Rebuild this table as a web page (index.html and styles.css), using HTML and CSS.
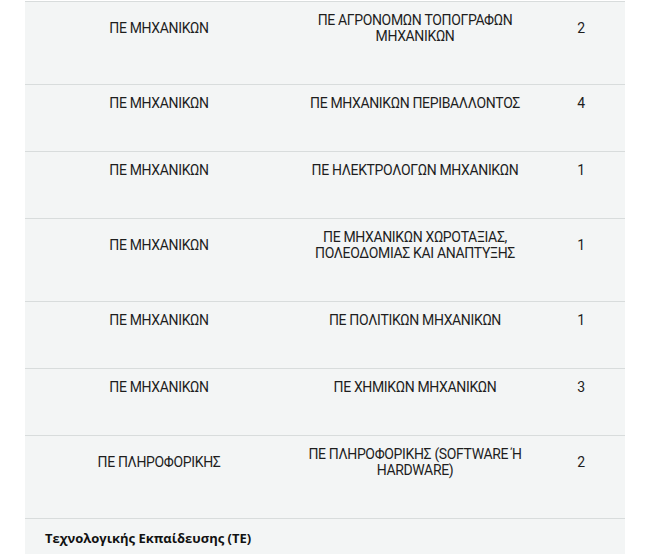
FILE: index.html
```html
<!DOCTYPE html>
<html lang="el">
<head>
<meta charset="utf-8">
<link rel="stylesheet" href="styles.css">
</head>
<body>
<div class="page">
  <table class="posts">
    <colgroup>
      <col class="c-branch">
      <col class="c-spec">
      <col class="c-num">
    </colgroup>
    <tbody>
      <tr><td>ΠΕ ΜΗΧΑΝΙΚΩΝ</td><td>ΠΕ ΑΓΡΟΝΟΜΩΝ ΤΟΠΟΓΡΑΦΩΝ ΜΗΧΑΝΙΚΩΝ</td><td>2</td></tr>
      <tr><td>ΠΕ ΜΗΧΑΝΙΚΩΝ</td><td>ΠΕ ΜΗΧΑΝΙΚΩΝ ΠΕΡΙΒΑΛΛΟΝΤΟΣ</td><td>4</td></tr>
      <tr><td>ΠΕ ΜΗΧΑΝΙΚΩΝ</td><td>ΠΕ ΗΛΕΚΤΡΟΛΟΓΩΝ ΜΗΧΑΝΙΚΩΝ</td><td>1</td></tr>
      <tr><td>ΠΕ ΜΗΧΑΝΙΚΩΝ</td><td>ΠΕ ΜΗΧΑΝΙΚΩΝ ΧΩΡΟΤΑΞΙΑΣ, ΠΟΛΕΟΔΟΜΙΑΣ ΚΑΙ ΑΝΑΠΤΥΞΗΣ</td><td>1</td></tr>
      <tr><td>ΠΕ ΜΗΧΑΝΙΚΩΝ</td><td>ΠΕ ΠΟΛΙΤΙΚΩΝ ΜΗΧΑΝΙΚΩΝ</td><td>1</td></tr>
      <tr><td>ΠΕ ΜΗΧΑΝΙΚΩΝ</td><td>ΠΕ ΧΗΜΙΚΩΝ ΜΗΧΑΝΙΚΩΝ</td><td>3</td></tr>
      <tr><td>ΠΕ ΠΛΗΡΟΦΟΡΙΚΗΣ</td><td>ΠΕ ΠΛΗΡΟΦΟΡΙΚΗΣ (SOFTWARE Ή HARDWARE)</td><td>2</td></tr>
      <tr class="group"><th colspan="3">Τεχνολογικής Εκπαίδευσης (ΤΕ)</th></tr>
    </tbody>
  </table>
</div>
</body>
</html>
```

FILE: styles.css
```css
html, body {
  margin: 0;
  padding: 0;
  background: #ffffff;
}

.page {
  padding: 1px 0 0 25px;
}

.posts {
  width: 600px;
  border-collapse: collapse;
  table-layout: fixed;
  background: #f3f5f5;
  font-family: Roboto, "Liberation Sans", sans-serif;
  font-size: 14px;
  letter-spacing: -0.35px;
  line-height: 16px;
  color: #1e1e1e;
}

.c-branch { width: 268px; }
.c-spec { width: 244px; }
.c-num { width: 88px; }

.posts td {
  border-top: 1px solid #d8dcdc;
  padding: 10px 8px 40px;
  text-align: center;
  vertical-align: middle;
}

.posts .group th {
  border-top: 1px solid #d8dcdc;
  padding: 11px 20px 20px;
  text-align: left;
  font-family: "Open Sans", "Noto Sans", sans-serif;
  font-weight: 700;
  font-size: 13px;
  letter-spacing: 0;
  line-height: 16px;
  color: #111;
}
```
